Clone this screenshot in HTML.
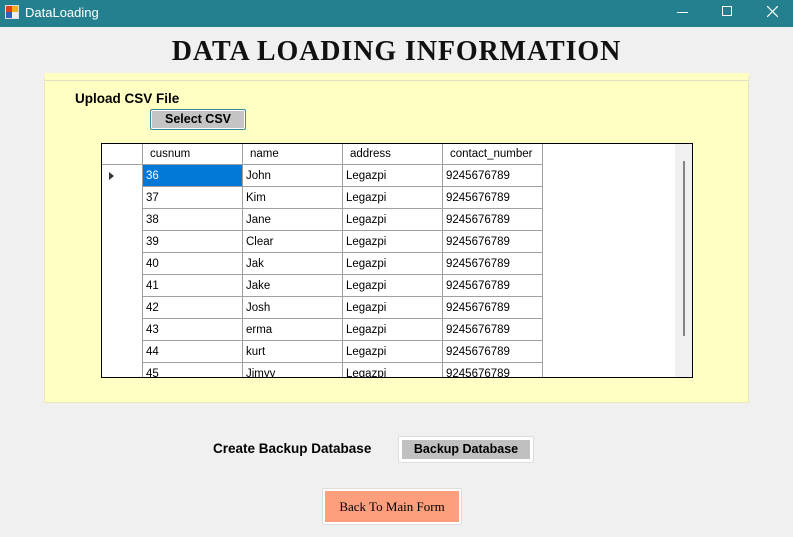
<!DOCTYPE html>
<html><head><style>
*{margin:0;padding:0;box-sizing:border-box}
body{width:793px;height:537px;background:#f0f0f0;position:relative;overflow:hidden;font-family:"Liberation Sans",sans-serif}
.tb{position:absolute;left:0;top:0;width:793px;height:27px;background:#247f8e;color:#fff;font-size:13px}
.a{position:absolute}
.grid{position:absolute;left:101px;top:143px;width:592px;height:235px;border:1px solid #000;background:#fff;overflow:hidden}
.c{position:absolute;height:22px;border-right:1px solid #a0a0a0;border-bottom:1px solid #a0a0a0;font-size:11.5px;line-height:23px;padding-left:3px;color:#000;background:#fff}
.btn{position:absolute;font-family:"Liberation Sans",sans-serif;font-weight:bold;text-align:center}
</style></head><body>
<div class="tb">
 <svg class="a" style="left:5px;top:5px" width="14" height="14"><rect x="0" y="0" width="14" height="14" fill="#ddd"/><rect x="1" y="1" width="6" height="6" fill="#e04020"/><rect x="7" y="1" width="6" height="6" fill="#f0b020"/><rect x="1" y="7" width="6" height="6" fill="#3060c0"/><rect x="7" y="7" width="6" height="6" fill="#eee"/></svg>
 <div class="a" style="left:25px;top:5px">DataLoading</div>
 <div class="a" style="left:677px;top:12px;width:11px;height:1px;background:#fff"></div>
 <div class="a" style="left:722px;top:6px;width:10px;height:10px;border:1px solid #fff"></div>
 <svg class="a" style="left:767px;top:6px" width="11" height="11"><path d="M0 0L11 11M11 0L0 11" stroke="#fff" stroke-width="1.2"/></svg>
</div>
<div class="a" style="left:0;top:36px;width:793px;text-align:center;font-family:'Liberation Serif',serif;font-weight:bold;font-size:28px;letter-spacing:0.9px;color:#111">DATA LOADING INFORMATION</div>
<div class="a" style="left:44px;top:73px;width:705px;height:330px;background:#ffffc4;border:1px solid #e8e8b8;border-top:7px solid #ffffc4;box-shadow:inset 0 1px 0 #e0e0c0"></div>
<div class="a" style="left:75px;top:91px;font-weight:bold;font-size:13.5px;color:#000">Upload CSV File</div>
<div class="btn" style="left:150px;top:109px;width:96px;height:21px;border:1px solid #3a8a9a;border-radius:2px;background:#c4c4c4;font-size:12.5px;line-height:19px;box-shadow:inset 0 0 0 1px #fff">Select CSV</div>
<div class="grid">
 <div class="a" style="left:573px;top:0;width:17px;height:235px;background:#f0f0f0"></div>
 <div class="a" style="left:581px;top:17px;width:2px;height:175px;background:#858585"></div>
 <div id="g"></div>
</div>
<div class="a" style="left:213px;top:441px;font-weight:bold;font-size:13.5px">Create Backup Database</div>
<div class="btn" style="left:398px;top:436px;width:136px;height:27px;border:1px solid #ddd;border-radius:2px;background:#fff;padding:3px"><div style="background:#c0c0c0;height:19px;font-size:12.5px;line-height:19px">Backup Database</div></div>
<div class="a" style="left:322px;top:488px;width:140px;height:37px;border:1px solid #ddd;border-radius:2px;background:#fff;padding:2px"><div style="background:#fd9e7c;height:31px;font-family:'Liberation Serif',serif;font-size:13px;line-height:31px;text-align:center">Back To Main Form</div></div>
<script>
var g=document.getElementById('g'),h='';
var cols=[[0,41],[41,100],[141,100],[241,100],[341,100]];
var hd=['','cusnum','name','address','contact_number'];
for(var i=0;i<5;i++)h+='<div class="c" style="left:'+cols[i][0]+'px;top:0;width:'+cols[i][1]+'px;height:21px;line-height:21px;padding-left:'+(i?7:3)+'px">'+hd[i]+'</div>';
var n=['John','Kim','Jane','Clear','Jak','Jake','Josh','erma','kurt','Jimyy'];
for(var r=0;r<10;r++){var t=21+r*22;
 var v=['',36+r,n[r],'Legazpi','9245676789'];
 for(var i=0;i<5;i++){var st='left:'+cols[i][0]+'px;top:'+t+'px;width:'+cols[i][1]+'px;';
  if(i==0)st+='border-bottom:none;';
  if(r==0&&i==1)st+='background:#0078d7;color:#fff;';
  var tx=v[i];if(r==0&&i==0)tx='<span style="display:inline-block;margin-left:4px;border-left:5px solid #333;border-top:4px solid transparent;border-bottom:4px solid transparent;vertical-align:middle"></span>';
  h+='<div class="c" style="'+st+'">'+tx+'</div>';}}
g.innerHTML=h;
</script>
</body></html>
